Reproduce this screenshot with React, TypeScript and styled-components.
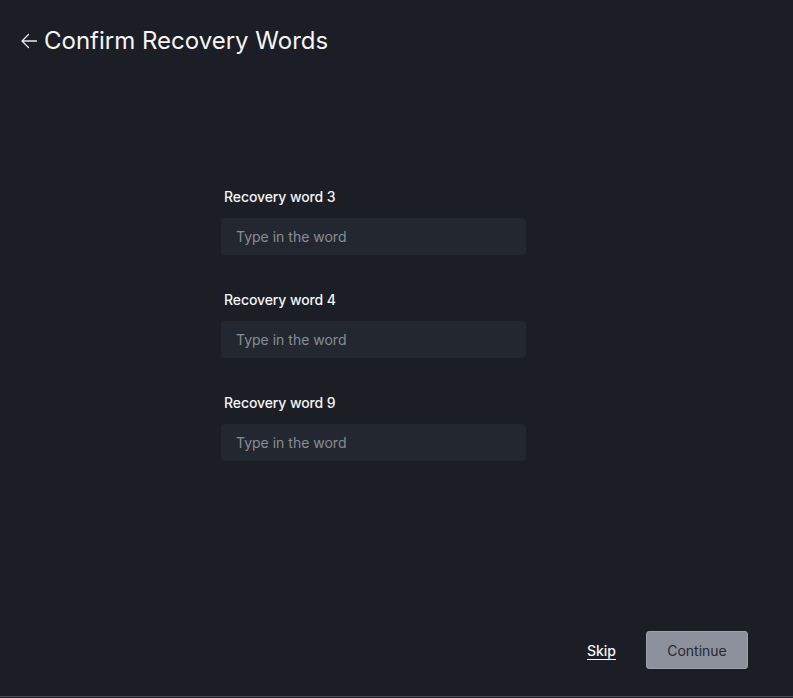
import React from 'react';
import styled, { createGlobalStyle } from 'styled-components';

const GlobalStyle = createGlobalStyle`
  html, body {
    margin: 0;
    padding: 0;
    background: #1b1e24;
  }
  * {
    box-sizing: border-box;
  }
`;

const Screen = styled.div`
  height: calc(100vh - 1px);
  display: flex;
  flex-direction: column;
  background: #1b1e24;
  border-bottom: 1px solid #4a4c50;
  font-family: Inter, 'Noto Sans', sans-serif;
  color: #f4f5f7;
`;

const Header = styled.header`
  display: flex;
  align-items: center;
  gap: 6px;
  padding: 26px 20px 0;
`;

const BackButton = styled.button`
  display: flex;
  align-items: center;
  justify-content: center;
  width: 18px;
  height: 29px;
  padding: 0;
  border: none;
  background: none;
  color: #e8eaed;
  cursor: pointer;
`;

const Title = styled.h1`
  margin: 0;
  font-size: 24px;
  line-height: 29px;
  font-weight: 400;
`;

const Form = styled.main`
  flex: 1;
  display: flex;
  flex-direction: column;
  gap: 36px;
  width: 305px;
  margin: 133px 0 0 221px;
`;

const Field = styled.label`
  display: flex;
  flex-direction: column;
  gap: 12px;
`;

const FieldLabel = styled.span`
  padding-left: 3px;
  font-size: 14px;
  line-height: 18px;
  font-weight: 500;
  letter-spacing: -0.1px;
  color: #f4f5f7;
`;

const WordInput = styled.input`
  height: 37px;
  padding: 0 15px;
  border: none;
  border-radius: 4px;
  background: #232830;
  color: #f4f5f7;
  font-family: inherit;
  font-size: 14px;
  outline: none;
  &::placeholder {
    color: #888d96;
  }
`;

const Footer = styled.footer`
  display: flex;
  justify-content: flex-end;
  align-items: center;
  gap: 30px;
  padding: 0 45px 27px 0;
`;

const LinkButton = styled.button`
  padding: 0;
  border: none;
  background: none;
  color: #f4f5f7;
  font-family: inherit;
  font-size: 14px;
  font-weight: 500;
  text-decoration: underline;
  text-underline-offset: 3px;
  cursor: pointer;
`;

const PrimaryButton = styled.button<{ $disabled?: boolean }>`
  width: 102px;
  height: 38px;
  border: 1px solid #9ca1ab;
  border-radius: 3px;
  background: ${({ $disabled }) => ($disabled ? '#8c919c' : '#e8eaed')};
  color: #262a31;
  font-family: inherit;
  font-size: 14px;
  cursor: ${({ $disabled }) => ($disabled ? 'default' : 'pointer')};
`;

const ArrowLeft = () => (
  <svg width="18" height="18" viewBox="0 0 18 18" fill="none">
    <path
      d="M16.5 9H2M8.5 2.5L2 9l6.5 6.5"
      stroke="currentColor"
      strokeWidth="1.3"
      strokeLinecap="round"
      strokeLinejoin="round"
    />
  </svg>
);

const words = [3, 4, 9];

export default function App() {
  return (
    <>
      <GlobalStyle />
      <Screen>
        <Header>
          <BackButton aria-label="Back">
            <ArrowLeft />
          </BackButton>
          <Title>Confirm Recovery Words</Title>
        </Header>
        <Form>
          {words.map((n) => (
            <Field key={n}>
              <FieldLabel>Recovery word {n}</FieldLabel>
              <WordInput placeholder="Type in the word" />
            </Field>
          ))}
        </Form>
        <Footer>
          <LinkButton>Skip</LinkButton>
          <PrimaryButton $disabled>Continue</PrimaryButton>
        </Footer>
      </Screen>
    </>
  );
}
